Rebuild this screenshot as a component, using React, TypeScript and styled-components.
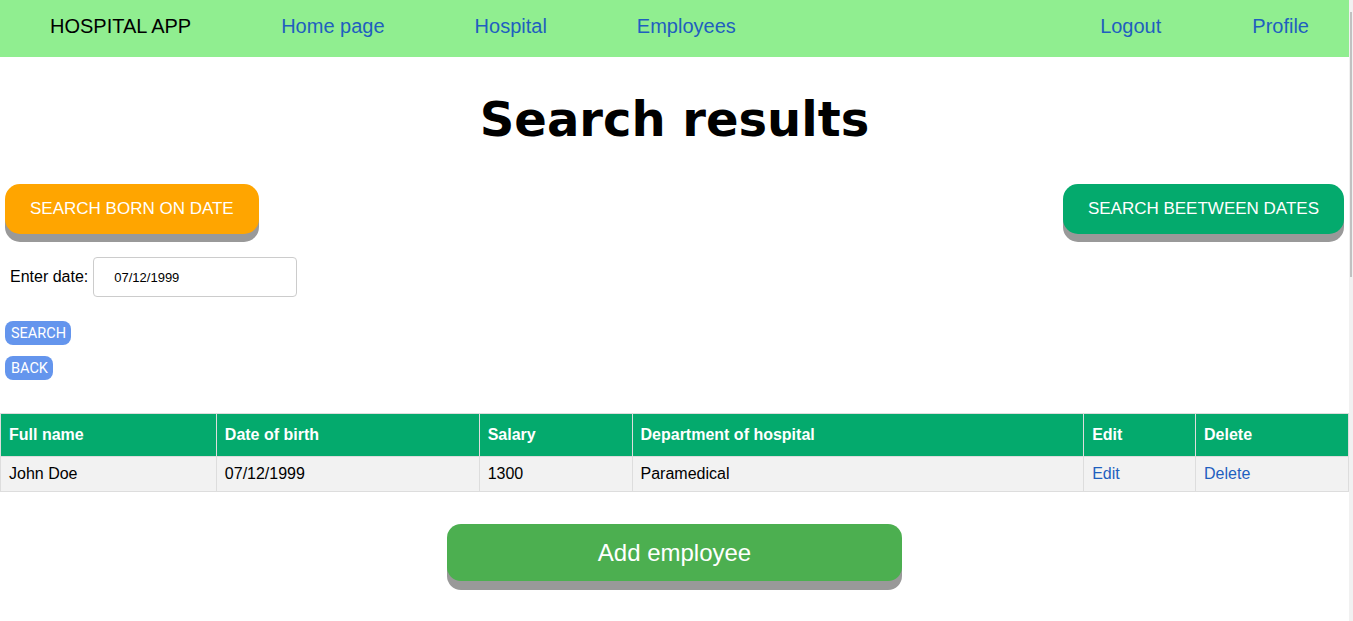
import React from "react";
import styled, { createGlobalStyle } from "styled-components";

const Global = createGlobalStyle`
  html { background: #f1f1f1; }
  body {
    margin: 0;
    font-family: "Liberation Sans", Arial, sans-serif;
    color: #000;
  }
  body::after {
    content: "";
    position: fixed;
    top: 12px;
    right: 1px;
    width: 2px;
    height: 265px;
    background: #c1c1c1;
  }
`;

const Page = styled.div`
  margin-right: 4px;
  min-height: 621px;
  background: #fff;
`;

const Nav = styled.nav`
  height: 57px;
  box-sizing: border-box;
  background: #90ee90;
  display: flex;
  align-items: center;
  justify-content: space-between;
  padding: 0 40px 4px 50px;
  font-size: 20px;
`;

const NavGroup = styled.div<{ $gap: number }>`
  display: flex;
  align-items: center;
  gap: ${(p) => p.$gap}px;
`;

const Brand = styled.span`
  color: #000;
`;

const NavLink = styled.a`
  color: #1f5fbf;
  text-decoration: none;
`;

const Title = styled.h1`
  font-family: "DejaVu Sans", Verdana, sans-serif;
  font-weight: bold;
  font-size: 48px;
  text-align: center;
  margin: 34px 0 37px;
  line-height: 56px;
`;

const ButtonRow = styled.div`
  display: flex;
  justify-content: space-between;
  padding: 0 5px;
`;

const BigButton = styled.button<{ $bg: string }>`
  height: 50px;
  padding: 0 25px;
  border: none;
  border-radius: 15px;
  background: ${(p) => p.$bg};
  color: #fff;
  font-family: "Liberation Sans", Arial, sans-serif;
  font-size: 17px;
  box-shadow: 0 8px #999;
  cursor: pointer;
`;

const Form = styled.div`
  padding: 23px 5px 0;
  display: flex;
  flex-direction: column;
  align-items: flex-start;
`;

const DateRow = styled.div`
  display: flex;
  align-items: center;
  gap: 5px;
  padding-left: 5px;
`;

const Label = styled.label`
  font-size: 16px;
`;

const DateInput = styled.input`
  width: 204px;
  height: 40px;
  box-sizing: border-box;
  padding: 0 20px;
  border: 1px solid #ccc;
  border-radius: 4px;
  font-family: "Liberation Sans", Arial, sans-serif;
  font-size: 13px;
  color: #000;
`;

const SmallButton = styled.button<{ $top: number }>`
  margin-top: ${(p) => p.$top}px;
  height: 24px;
  padding: 0 5px 0 6px;
  border: none;
  border-radius: 8px;
  background: #6495ed;
  color: #fff;
  font-family: Roboto, "Liberation Sans", Arial, sans-serif;
  font-size: 14.5px;
  cursor: pointer;
`;

const Table = styled.table`
  margin-top: 33px;
  width: 100%;
  border-collapse: collapse;
  font-family: "Liberation Sans", Arial, sans-serif;
  font-size: 16px;
`;

const Th = styled.th<{ $w: number }>`
  width: ${(p) => p.$w}px;
  box-sizing: border-box;
  background: #04aa6d;
  color: #fff;
  text-align: left;
  padding: 12px 8px;
  border: 1px solid #ddd;
  line-height: 18px;
  white-space: nowrap;
`;

const Td = styled.td`
  background: #f2f2f2;
  padding: 8px;
  border: 1px solid #ddd;
  line-height: 18px;
  white-space: nowrap;
`;

const CellLink = styled.a`
  color: #1f5fbf;
  text-decoration: none;
`;

const Footer = styled.div`
  display: flex;
  justify-content: center;
  margin-top: 32px;
  padding-bottom: 31px;
`;

const AddButton = styled.button`
  width: 455px;
  height: 57px;
  border: none;
  border-radius: 14px;
  background: #4caf50;
  color: #fff;
  font-family: "Liberation Sans", Arial, sans-serif;
  font-size: 24px;
  box-shadow: 0 9px #999;
  cursor: pointer;
`;

const cols = [
  { name: "Full name", w: 216 },
  { name: "Date of birth", w: 263 },
  { name: "Salary", w: 153 },
  { name: "Department of hospital", w: 452 },
  { name: "Edit", w: 112 },
  { name: "Delete", w: 153 },
];

export default function App() {
  return (
    <Page>
      <Global />
      <Nav>
        <NavGroup $gap={90}>
          <Brand>HOSPITAL APP</Brand>
          <NavLink href="#">Home page</NavLink>
          <NavLink href="#">Hospital</NavLink>
          <NavLink href="#">Employees</NavLink>
        </NavGroup>
        <NavGroup $gap={91}>
          <NavLink href="#">Logout</NavLink>
          <NavLink href="#">Profile</NavLink>
        </NavGroup>
      </Nav>
      <Title>Search results</Title>
      <ButtonRow>
        <BigButton $bg="#ffa500">SEARCH BORN ON DATE</BigButton>
        <BigButton $bg="#04aa6d">SEARCH BEETWEEN DATES</BigButton>
      </ButtonRow>
      <Form>
        <DateRow>
          <Label>Enter date:</Label>
          <DateInput type="text" defaultValue="07/12/1999" />
        </DateRow>
        <SmallButton $top={24}>SEARCH</SmallButton>
        <SmallButton $top={11}>BACK</SmallButton>
      </Form>
      <Table>
        <thead>
          <tr>
            {cols.map((c) => (
              <Th key={c.name} $w={c.w}>
                {c.name}
              </Th>
            ))}
          </tr>
        </thead>
        <tbody>
          <tr>
            <Td>John Doe</Td>
            <Td>07/12/1999</Td>
            <Td>1300</Td>
            <Td>Paramedical</Td>
            <Td>
              <CellLink href="#">Edit</CellLink>
            </Td>
            <Td>
              <CellLink href="#">Delete</CellLink>
            </Td>
          </tr>
        </tbody>
      </Table>
      <Footer>
        <AddButton>Add employee</AddButton>
      </Footer>
    </Page>
  );
}
